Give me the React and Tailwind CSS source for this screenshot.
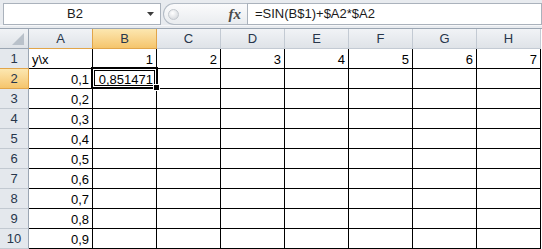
import React from 'react';

const COLS = ['A', 'B', 'C', 'D', 'E', 'F', 'G', 'H'];

const ROWS = [
  ['y\\x', '1', '2', '3', '4', '5', '6', '7'],
  ['0,1', '0,851471', '', '', '', '', '', ''],
  ['0,2', '', '', '', '', '', '', ''],
  ['0,3', '', '', '', '', '', '', ''],
  ['0,4', '', '', '', '', '', '', ''],
  ['0,5', '', '', '', '', '', '', ''],
  ['0,6', '', '', '', '', '', '', ''],
  ['0,7', '', '', '', '', '', '', ''],
  ['0,8', '', '', '', '', '', '', ''],
  ['0,9', '', '', '', '', '', '', ''],
];

// header classes written out in full so tailwind picks them up
const HEAD_CLASS = {
  A: 'border-r border-[#e1a54a] bg-gradient-to-b from-[#f1f3f6] to-[#dfe3e8]',
  B: 'border-r border-[#e1a54a] bg-gradient-to-b from-[#fce7b0] to-[#f5c56c]',
  other: 'border-r border-[#c3cad3] bg-gradient-to-b from-[#f1f3f6] to-[#dfe3e8]',
};

function FormulaBar() {
  return (
    <div className="flex h-[29px] flex-col border-b border-[#9ba6b3] bg-[#e8ebef]">
      <div className="flex h-[25px] pl-[3px] pt-[3px]">
        <div className="flex h-[22px] w-[158px] items-center border border-[#aab2bc] bg-white">
          <span className="flex-1 pl-[2px] text-center text-[#1a1a1a]">B2</span>
          <svg width="14" height="8" viewBox="0 0 14 8" className="mr-[2px]">
            <polygon points="3,2 10,2 6.5,6" fill="#3c3c3c" />
          </svg>
        </div>
        <div className="ml-[2px] flex h-[22px] w-[84px] items-center rounded-l-[11px] border border-r-0 border-[#b3bbc5] bg-gradient-to-b from-[#fbfbfc] to-[#e9ecef]">
          <div className="ml-[4px] h-[11px] w-[11px] rounded-full border border-[#c3c8ce] bg-[radial-gradient(circle_at_40%_35%,#ffffff_0%,#dcdfe3_70%,#c9cdd2_100%)]" />
          <span className="ml-auto mr-[6px] font-['Liberation_Serif',serif] text-[15px] font-bold italic text-[#4a4a4a]">
            fx
          </span>
        </div>
        <div className="flex h-[22px] flex-1 items-center border border-[#aab2bc] bg-white pl-[7px] text-[#1a1a1a]">
          =SIN(B$1)+$A2*$A2
        </div>
      </div>
      <div className="flex-1 border-t border-[#f6f7f9]" />
    </div>
  );
}

function HeaderRow() {
  return (
    <div className="flex h-[20px]">
      <div className="relative h-[20px] w-[29px] border-r border-b border-[#9ba6b3] bg-gradient-to-b from-[#f1f3f6] to-[#dfe3e8]">
        <svg width="14" height="14" viewBox="0 0 14 14" className="absolute right-[3px] bottom-[2px]">
          <polygon points="13,1 13,13 1,13" fill="#b9c1ca" />
        </svg>
      </div>
      {COLS.map(c => (
        <div
          key={c}
          className={`h-[20px] w-[64px] border-b border-[#9ba6b3] text-center leading-[19px] text-[#27364b] ${
            c === 'B' ? HEAD_CLASS.B : c === 'A' ? HEAD_CLASS.A : HEAD_CLASS.other
          }`}
        >
          {c}
        </div>
      ))}
    </div>
  );
}

function DataRow({ index, cells }) {
  const selected = index === 2;
  const above = index === 1;
  return (
    <div className="flex h-[20px]">
      <div
        className={`h-[20px] w-[29px] border-r border-b text-center leading-[19px] text-[#27364b] ${
          selected
            ? 'border-[#e1a54a] bg-gradient-to-b from-[#fce7b0] to-[#f5c56c]'
            : above
              ? 'border-r-[#9ba6b3] border-b-[#e1a54a] bg-[#e4e8ed]'
              : 'border-r-[#9ba6b3] border-b-[#c2c9d1] bg-[#e4e8ed]'
        }`}
      >
        {index}
      </div>
      {cells.map((v, i) => (
        <div
          key={i}
          className={`h-[20px] w-[64px] border-r border-b border-black px-[3px] pt-px leading-[19px] text-black ${
            index === 1 && i === 0 ? 'text-left' : 'text-right'
          }`}
        >
          {v}
        </div>
      ))}
    </div>
  );
}

export default function App() {
  return (
    <div className="relative h-[249px] w-[542px] overflow-hidden bg-white font-['Liberation_Sans',Arial,sans-serif] text-[13px]">
      <FormulaBar />
      <HeaderRow />
      {ROWS.map((cells, i) => (
        <DataRow key={i} index={i + 1} cells={cells} />
      ))}

      {/* active cell frame on B2 */}
      <div className="pointer-events-none absolute left-[91px] top-[67px] h-[22px] w-[67px] border-2 border-black">
        <div className="absolute inset-0 border border-white">
          <div className="absolute inset-0 border border-black" />
        </div>
      </div>
      <div className="absolute left-[153px] top-[84px] h-[7px] w-[7px] border border-white bg-black" />
    </div>
  );
}
